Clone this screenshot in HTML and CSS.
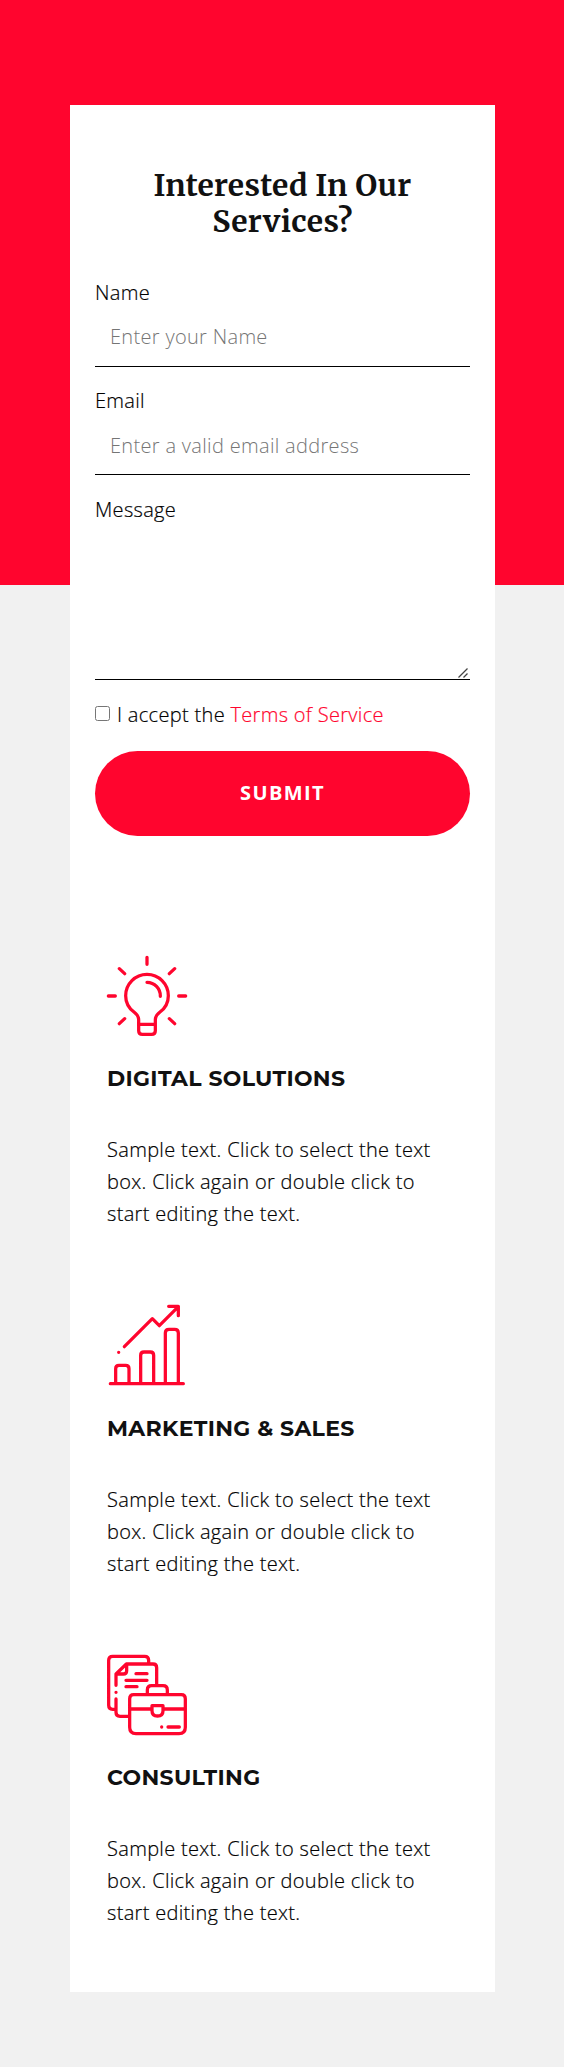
FILE: index.html
```
<!DOCTYPE html>
<html lang="en">
<head>
<meta charset="utf-8">
<title>Interested In Our Services?</title>
<link rel="stylesheet" href="styles.css">
</head>
<body>
<main class="card">
  <h1 class="heading">Interested In Our Services?</h1>
  <form class="form">
    <div class="group">
      <label class="label" for="name">Name</label>
      <input class="input name" id="name" type="text" placeholder="Enter your Name">
    </div>
    <div class="group">
      <label class="label" for="email">Email</label>
      <input class="input" id="email" type="email" placeholder="Enter a valid email address">
    </div>
    <div class="group">
      <label class="label" for="message">Message</label>
      <textarea class="input message" id="message"></textarea>
      <svg class="grip" viewBox="0 0 10 10"><path d="M.5 9.500l9-9M5.500 9.500l4-4"/></svg>
    </div>
    <div class="agree">
      <input class="check" id="agree" type="checkbox">
      <label for="agree">I accept the <a class="link" href="#">Terms of Service</a></label>
    </div>
    <button class="submit" type="button">SUBMIT</button>
  </form>
  <section class="features">
    <article class="feature">
      <svg class="icon" viewBox="36 48 240 240">
        <path d="M156 52v21M73 86l16 15M239 86l-16 15M40 168h21M251 168h21M73 251l16-15M239 251l-16-15M156 127a40 41 0 0 1 40 42"/>
        <path d="M131 253v-14c0-10-5-16-14-23-16-12-25-29-25-49a64 64 0 0 1 128 0c0 20-9 37-25 49-9 7-14 13-14 23v14zM131 253v19q0 11 11 11h28q11 0 11-11v-19"/>
      </svg>
      <h2 class="title">DIGITAL SOLUTIONS</h2>
      <p class="text">Sample text. Click to select the text box. Click again or double click to start editing the text.</p>
    </article>
    <article class="feature">
      <svg class="icon" viewBox="36 48 240 240">
        <path d="M46 281h219M62 281v-45q0-10 10-10h20q10 0 10 10v45M137 281v-85q0-10 10-10h19q10 0 10 10v85M211 281V129q0-11 11-11h17q11 0 11 11v152M71 187h.1M88 170l84-84 21 21 57-57M221 49h29v28"/>
      </svg>
      <h2 class="title">MARKETING &amp; SALES</h2>
      <p class="text">Sample text. Click to select the text box. Click again or double click to start editing the text.</p>
    </article>
    <article class="feature">
      <svg class="icon" viewBox="36 45 240 240">
        <path d="M161 69v-8q0-12-12-12H53q-12 0-12 12v135q0 12 12 12h10M63 136v-34l31-30h80q11 0 11 11v51M63 157h.1M63 177v40q0 12 12 12h24M65 102h20q10 0 10-10V73M123 101h33M93 121h63M93 140h33"/>
        <path d="M157 160v-10q0-13 13-13h34q13 0 13 13v10M116 164h143q12 0 12 12v86q0 19-19 19H123q-19 0-19-19v-86q0-12 12-12zM105 207h66M205 207h66M171 197h33v15q0 16-16.500 16t-16.500-16zM200 261h.1M219 261h34"/>
      </svg>
      <h2 class="title">CONSULTING</h2>
      <p class="text">Sample text. Click to select the text box. Click again or double click to start editing the text.</p>
    </article>
  </section>
</main>
</body>
</html>
```
FILE: styles.css
```
* { box-sizing: border-box; }
html { background: #f1f1f1; }
body {
  margin: 0;
  padding: 105px 69px 75px 70px;
  background: linear-gradient(#ff052e, #ff052e) top / 100% 585px no-repeat;
  color: #000;
  font: 300 20px/32px "Open Sans", sans-serif;
  letter-spacing: .32px;
}
.label, .agree, .text { -webkit-text-stroke: .2px; }
.card { background: #fff; padding: 62px 25px 63px; }
.heading {
  margin: 0 0 38px;
  color: #111;
  font: 700 30px/36px Merriweather, "Liberation Serif", serif;
  letter-spacing: .35px;
  text-align: center;
}
.form { display: flex; flex-direction: column; }
.group { display: flex; flex-direction: column; position: relative; margin-bottom: 19px; }
.group:first-child { margin-bottom: 18px; }
.input {
  display: block;
  width: 100%;
  height: 58px;
  padding: 0 15px;
  border: 0;
  border-bottom: 1px solid #000;
  background: transparent;
  color: #111;
  font: inherit;
  letter-spacing: inherit;
  outline: 0;
}
.name { padding-bottom: 2px; }
.input::placeholder { color: #757575; }
.message { height: 154px; resize: none; }
.grip {
  position: absolute;
  right: 2px;
  bottom: 2px;
  width: 10px;
  height: 10px;
  fill: none;
  stroke: #444;
  stroke-width: 1.3;
}
.agree { display: flex; align-items: flex-start; gap: 7px; }
.check { width: 15px; height: 15px; margin: 7px 0 0; }
.link { color: #ff052e; text-decoration: none; }
.submit {
  height: 85px;
  margin-top: 20px;
  padding: 0 0 2px;
  border: 0;
  border-radius: 43px;
  background: #ff052e;
  color: #fff;
  font: 700 20px/32px "Open Sans", sans-serif;
  letter-spacing: 1.4px;
}
.features { display: flex; flex-direction: column; gap: 75.5px; padding: 120px 12px 0; }
.icon {
  display: block;
  width: 80px;
  height: 80px;
  overflow: visible;
  fill: none;
  stroke: #ff052e;
  stroke-width: 9.8;
  stroke-linecap: round;
  stroke-linejoin: round;
}
.title {
  margin: 30px 0 42px;
  color: #111;
  font: 700 22px/26px Montserrat, Inter, sans-serif;
  letter-spacing: .33px;
}
.text { margin: 0; }
```
